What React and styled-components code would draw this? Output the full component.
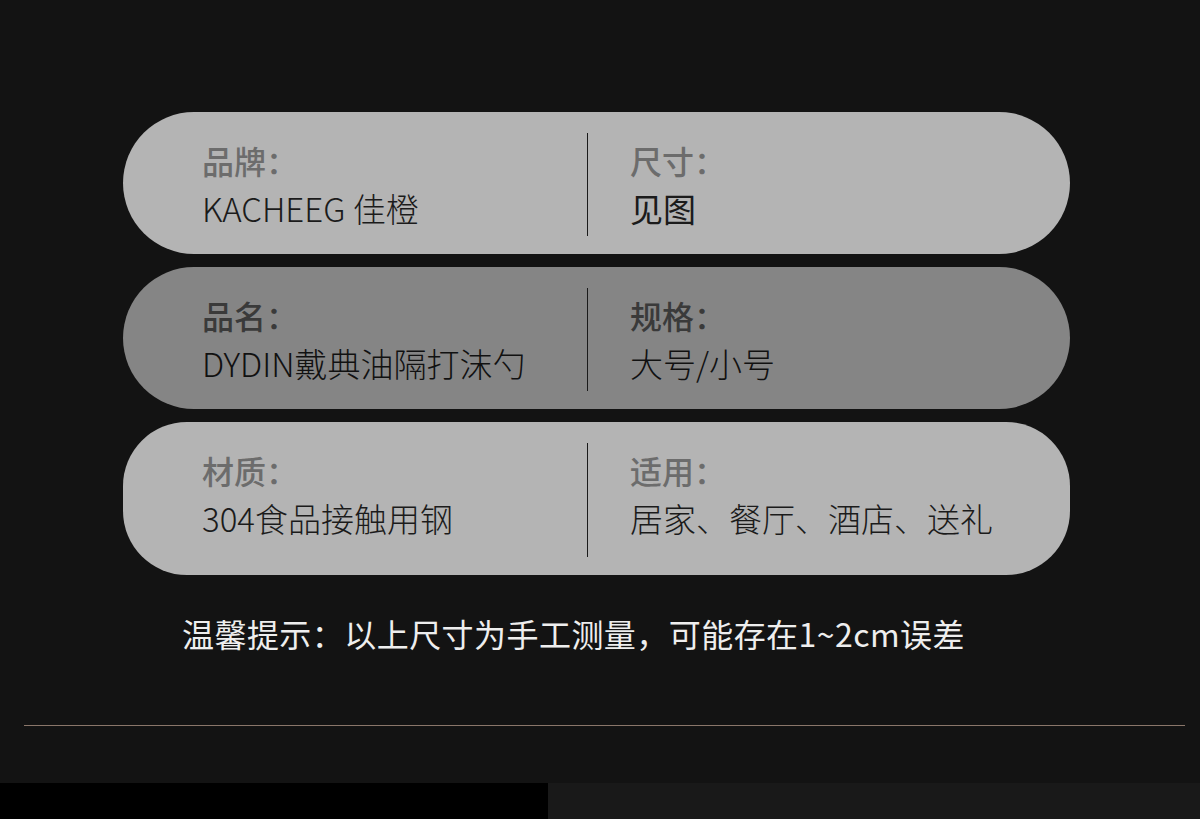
import React from "react";
import styled, { createGlobalStyle } from "styled-components";

const GlobalStyle = createGlobalStyle`
  html, body {
    margin: 0;
    padding: 0;
    background: #131313;
  }
  body {
    font-family: "Noto Sans CJK SC", "Noto Sans", sans-serif;
  }
`;

const rows = [
  {
    tone: "light",
    height: 142,
    radius: 71,
    left: { label: "品牌：", value: "KACHEEG 佳橙" },
    right: { label: "尺寸：", value: "见图", strong: true },
  },
  {
    tone: "dark",
    height: 142,
    radius: 71,
    left: { label: "品名：", value: "DYDIN戴典油隔打沫勺" },
    right: { label: "规格：", value: "大号/小号" },
  },
  {
    tone: "light",
    height: 153,
    radius: 64,
    left: { label: "材质：", value: "304食品接触用钢" },
    right: { label: "适用：", value: "居家、餐厅、酒店、送礼" },
  },
];

const palette = {
  light: { bg: "#b4b4b4", label: "#6c6c6c", value: "#1b1b1b" },
  dark: { bg: "#858585", label: "#3a3a3a", value: "#111111" },
};

export default function App() {
  return (
    <Page>
      <GlobalStyle />
      <Cards>
        {rows.map((row, i) => (
          <Card key={i} $tone={row.tone} $height={row.height} $radius={row.radius}>
            <Cell $pad={79}>
              <Label $tone={row.tone}>{row.left.label}</Label>
              <Value $tone={row.tone}>{row.left.value}</Value>
            </Cell>
            <Divider />
            <Cell $pad={42}>
              <Label $tone={row.tone}>{row.right.label}</Label>
              <Value $tone={row.tone} $strong={row.right.strong}>
                {row.right.value}
              </Value>
            </Cell>
          </Card>
        ))}
      </Cards>
      <Note>温馨提示：以上尺寸为手工测量，可能存在1~2cm误差</Note>
      <Rule />
      <BottomStrip>
        <BlackBlock />
      </BottomStrip>
    </Page>
  );
}

const Page = styled.div`
  width: 1200px;
  height: 819px;
  overflow: hidden;
  background: #131313;
  padding-top: 112px;
  box-sizing: border-box;
  display: flex;
  flex-direction: column;
`;

const Cards = styled.div`
  display: flex;
  flex-direction: column;
  gap: 13px;
  margin-left: 123px;
  width: 947px;
`;

const Card = styled.div`
  display: grid;
  grid-template-columns: 464px 1px 1fr;
  height: ${(p) => p.$height}px;
  border-radius: ${(p) => p.$radius}px;
  background: ${(p) => palette[p.$tone].bg};
`;

const Cell = styled.div`
  display: flex;
  flex-direction: column;
  padding-left: ${(p) => p.$pad}px;
  padding-top: 24px;
`;

const Divider = styled.div`
  background: #1a1a1a;
  margin: 21px 0 18px;
`;

const Label = styled.div`
  font-size: 32px;
  line-height: 48px;
  font-weight: 500;
  color: ${(p) => palette[p.$tone].label};
`;

const Value = styled.div`
  font-size: 33px;
  line-height: 48px;
  font-weight: ${(p) => (p.$strong ? 400 : 300)};
  color: ${(p) => palette[p.$tone].value};
  white-space: nowrap;
`;

const Note = styled.div`
  margin: 34px 0 0 182px;
  font-size: 32px;
  line-height: 48px;
  letter-spacing: 0.45px;
  color: #eeeeee;
  white-space: nowrap;
`;

const Rule = styled.div`
  margin: 68px 15px 0 24px;
  height: 1px;
  background: #8a766a;
`;

const BottomStrip = styled.div`
  margin-top: 57px;
  flex: 1;
  background: #191919;
  display: flex;
`;

const BlackBlock = styled.div`
  width: 548px;
  background: #000;
`;
